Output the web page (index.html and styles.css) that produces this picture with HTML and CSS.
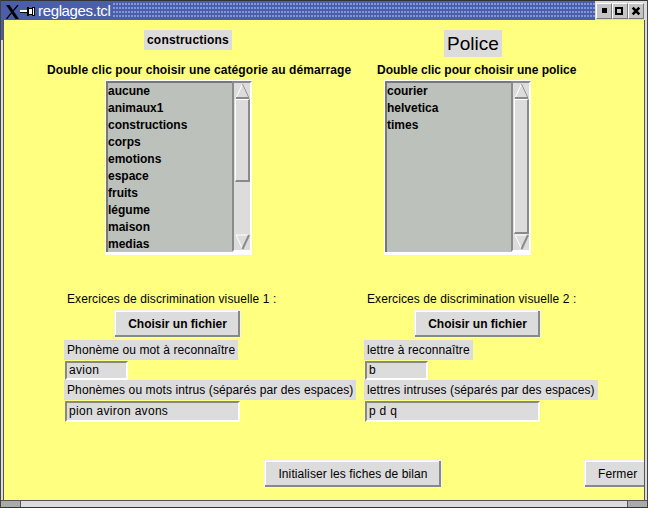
FILE: index.html
```html
<!DOCTYPE html>
<html lang="fr">
<head>
<meta charset="utf-8">
<title>reglages.tcl</title>
<link rel="stylesheet" href="styles.css">
</head>
<body>
<div class="window">
  <header class="titlebar">
    <svg class="wm-logo" width="14" height="14" viewBox="0 0 14 14"><path d="M1 0h3.5L14 14h-3.5z" fill="#000"/><path d="M1.5 14L13 0" stroke="#000" stroke-width="1.3" fill="none"/></svg>
    <svg class="wm-pin" width="15" height="9" viewBox="0 0 15 9"><path d="M0 3h7v2H0z" fill="#fff"/><path d="M0 5h7v1H0z" fill="#000"/><path d="M7 0h2v1h3V0h3v9h-3V8H9v1H7z" fill="#000"/><path d="M9 2h3v5H9z" fill="#fff"/><path d="M13 1h1v7h-1z" fill="#fff"/></svg>
    <span class="wm-title">reglages.tcl</span>
    <div class="wm-dots"></div>
    <div class="wm-buttons">
      <span class="wm-btn"><svg width="14" height="14" viewBox="0 0 14 14"><rect x="5" y="4" width="5" height="5" fill="#000"/></svg></span>
      <span class="wm-btn"><svg width="14" height="14" viewBox="0 0 14 14"><path d="M2 3h8v8H2zM4 5v4h4V5z" fill="#000" fill-rule="evenodd"/></svg></span>
      <span class="wm-btn"><svg width="14" height="14" viewBox="0 0 14 14"><path d="M3.7 3.7l6.6 6.6M10.3 3.7l-6.6 6.6" stroke="#000" stroke-width="2.6"/></svg></span>
    </div>
  </header>
  <main class="client">
    <div class="columns">
      <section class="col col-left">
        <div class="head-row"><span class="head-left">constructions</span></div>
        <div class="hint hint-left">Double clic pour choisir une catégorie au démarrage</div>
        <div class="listbox list-left">
          <ul class="items">
            <li>aucune</li><li>animaux1</li><li>constructions</li><li>corps</li><li>emotions</li><li>espace</li><li>fruits</li><li>légume</li><li>maison</li><li>medias</li>
          </ul>
          <div class="scrollbar">
            <svg class="arrow" width="15" height="16" viewBox="0 0 15 16"><path d="M7.5 1L14 15H1z" fill="#dcdcdc" stroke="#fff"/><path d="M14 15H1" stroke="#8a8a8a" stroke-width="2"/><path d="M7.5 1L14 15" stroke="#8a8a8a"/></svg>
            <div class="thumb thumb-left"></div>
            <div class="trough"></div>
            <svg class="arrow" width="15" height="16" viewBox="0 0 15 16"><path d="M1 1h13L7.5 15z" fill="#dcdcdc" stroke="#fff"/><path d="M14 1L7.5 15" stroke="#8a8a8a" stroke-width="2"/></svg>
          </div>
        </div>
        <div class="ex ex-left">Exercices de discrimination visuelle 1 :</div>
        <button class="btn btn-file btn-file-left">Choisir un fichier</button>
        <div class="field lead-left"><span class="lbl">Phonème ou mot à reconnaître</span></div>
        <div class="entry entry-short entry-left">avion</div>
        <div class="field lead-left"><span class="lbl">Phonèmes ou mots intrus (séparés par des espaces)</span></div>
        <div class="entry entry-long entry-left">pion aviron avons</div>
      </section>
      <section class="col col-right">
        <div class="head-row"><span class="head-right">Police</span></div>
        <div class="hint hint-right">Double clic pour choisir une police</div>
        <div class="listbox list-right">
          <ul class="items">
            <li>courier</li><li>helvetica</li><li>times</li>
          </ul>
          <div class="scrollbar">
            <svg class="arrow" width="15" height="16" viewBox="0 0 15 16"><path d="M7.5 1L14 15H1z" fill="#dcdcdc" stroke="#fff"/><path d="M14 15H1" stroke="#8a8a8a" stroke-width="2"/><path d="M7.5 1L14 15" stroke="#8a8a8a"/></svg>
            <div class="thumb thumb-right"></div>
            <svg class="arrow" width="15" height="16" viewBox="0 0 15 16"><path d="M1 1h13L7.5 15z" fill="#dcdcdc" stroke="#fff"/><path d="M14 1L7.5 15" stroke="#8a8a8a" stroke-width="2"/></svg>
          </div>
        </div>
        <div class="ex ex-right">Exercices de discrimination visuelle 2 :</div>
        <button class="btn btn-file btn-file-right">Choisir un fichier</button>
        <div class="field lead-right"><span class="lbl">lettre à reconnaître</span></div>
        <div class="entry entry-short entry-right">b</div>
        <div class="field lead-right"><span class="lbl">lettres intruses (séparés par des espaces)</span></div>
        <div class="entry entry-long entry-right">p d q</div>
      </section>
    </div>
    <div class="footer">
      <button class="btn btn-reset">Initialiser les fiches de bilan</button>
      <button class="btn btn-close">Fermer</button>
    </div>
  </main>
  <div class="bottom-frame"></div>
</div>
</body>
</html>
```
FILE: styles.css
```css
* { box-sizing: border-box; }
html, body { margin: 0; padding: 0; }
body { width: 648px; height: 508px; overflow: hidden; font-family: "Liberation Sans", Arial, sans-serif; color: #000; }
.window { width: 648px; height: 508px; display: flex; flex-direction: column; background: linear-gradient(#4a5fa8, #4a5fa8) 0 0 / 2px 40px no-repeat #dcdcdc; border-right: 1px solid #444; border-left: 1px solid #444; }
.titlebar { height: 20px; flex: none; display: flex; align-items: center; background: #4a5fa8; padding-left: 4px; border-top: 1px solid #333; }
.wm-logo { flex: none; margin-top: 2px; }
.wm-pin { flex: none; margin-left: 1px; margin-top: 1px; }
.wm-title { color: #fff; font-size: 15px; margin-left: 3px; width: 75px; flex: none; white-space: nowrap; letter-spacing: -.35px; }
.wm-dots { flex: 1; height: 16px; background-image: radial-gradient(circle at 1px 1px, #8496d8 .8px, transparent .9px); background-size: 3px 4px; }
.wm-buttons { display: flex; flex: none; width: 52px; background: #dcdcdc; height: 19px; align-items: flex-start; padding: 2px 3px 0 1px; }
.wm-btn { width: 16px; height: 16px; display: block; background: #c4c4c4; border: 1px solid; border-color: #fff #777 #777 #fff; }
.wm-btn svg { display: block; }
.client { flex: 1; background: #ffff80; margin: 0 2px 0 2px; border-left: 1px solid #555; border-right: 1px solid #555; display: flex; flex-direction: column; min-height: 0; overflow: hidden; }
.columns { display: flex; flex: none; height: 440px; }
.col { display: flex; flex-direction: column; align-items: flex-start; }
.col-left { width: 357px; flex: none; }
.col-right { width: 282px; flex: none; }
.head-row { height: 37px; padding-top: 10px; flex: none; }
.head-left { display: block; margin-left: 140px; background: #dcdcdc; font-weight: bold; font-size: 12px; line-height: 20px; padding: 0 3px; white-space: nowrap; letter-spacing: .2px; }
.head-right { display: block; margin-left: 83px; background: #dcdcdc; font-size: 19px; line-height: 27px; padding: 0 3px; }
.hint { font-weight: bold; font-size: 12px; line-height: 17px; height: 23px; padding-top: 5px; white-space: nowrap; }
.hint-left { margin-left: 43px; letter-spacing: .08px; }
.hint-right { margin-left: 16px; }
.listbox { display: flex; width: 147px; height: 175px; border-top: 1px solid #fff; border-left: 1px solid #fff; background: #fff; padding-bottom: 3px; flex: none; }
.list-left { margin-left: 101px; }
.list-right { margin-left: 23px; }
.items { list-style: none; margin: 0; padding: 0; width: 126px; flex: none; background: #bcc1bb; border-top: 2px solid #777; border-left: 2px solid #777; font-weight: bold; font-size: 12px; line-height: 17px; }
.items li { white-space: nowrap; }
.scrollbar { flex: 1; display: flex; flex-direction: column; background: #dcdcdc; border: 2px solid; border-color: #8a8a8a #fff #fff #8a8a8a; padding-left: 1px; }
.arrow { flex: none; display: block; }
.thumb { width: 15px; flex: none; background: #dcdcdc; border: solid; border-color: #fff #8a8a8a #8a8a8a #fff; border-width: 1px 2px 2px 1px; }
.thumb-left { height: 83px; }
.thumb-right { flex: 1; }
.trough { flex: 1; }
.ex { font-size: 12px; line-height: 15px; margin-top: 37px; white-space: nowrap; letter-spacing: .1px; }
.ex-left { margin-left: 63px; }
.ex-right { margin-left: 6px; }
.btn { font-family: inherit; font-size: 12px; background: #dcdcdc; color: #000; border: 1px solid #f4f4f4; box-shadow: inset -2px -2px 0 #888, inset 1px 1px 0 #fff; padding: 0; display: block; letter-spacing: .1px; }
.btn-file { width: 127px; height: 28px; font-weight: bold; margin-top: 3px; letter-spacing: 0; }
.btn-file-left { margin-left: 110px; }
.btn-file-right { margin-left: 53px; }
.field { height: 20px; flex: none; }
.btn + .field { margin-top: 2px; }
.lead-left { margin-left: 60px; }
.lead-right { margin-left: 3px; }
.lbl { display: block; background: #dcdcdc; font-size: 12px; line-height: 20px; padding: 0 3px; white-space: nowrap; letter-spacing: .1px; }
.entry { font-size: 12px; background: #dcdcdc; border: 2px solid; border-color: #888 #fff #fff #888; height: 19px; line-height: 15px; padding-left: 2px; margin-top: 1px; white-space: nowrap; letter-spacing: .3px; flex: none; }
.entry-left { margin-left: 61px; }
.entry-right { margin-left: 4px; }
.entry-short { width: 63px; }
.entry-long { width: 175px; height: 21px; line-height: 17px; }
.footer { flex: none; display: flex; padding-left: 260px; }
.btn-reset { width: 178px; height: 28px; flex: none; }
.btn-close { width: 70px; height: 28px; margin-left: 142px; flex: none; text-align: left; padding-left: 13px; }
.bottom-frame { flex: none; height: 8px; border-top: 1px solid #555; border-bottom: 1px solid #333; background:
  linear-gradient(#555, #555) 19px 0 / 1px 100% no-repeat,
  linear-gradient(#555, #555) 626px 0 / 1px 100% no-repeat,
  linear-gradient(#aaa, #aaa) 0 0 / 19px 100% no-repeat,
  linear-gradient(#aaa, #aaa) 627px 0 / 19px 100% no-repeat,
  #dcdcdc; }
```
